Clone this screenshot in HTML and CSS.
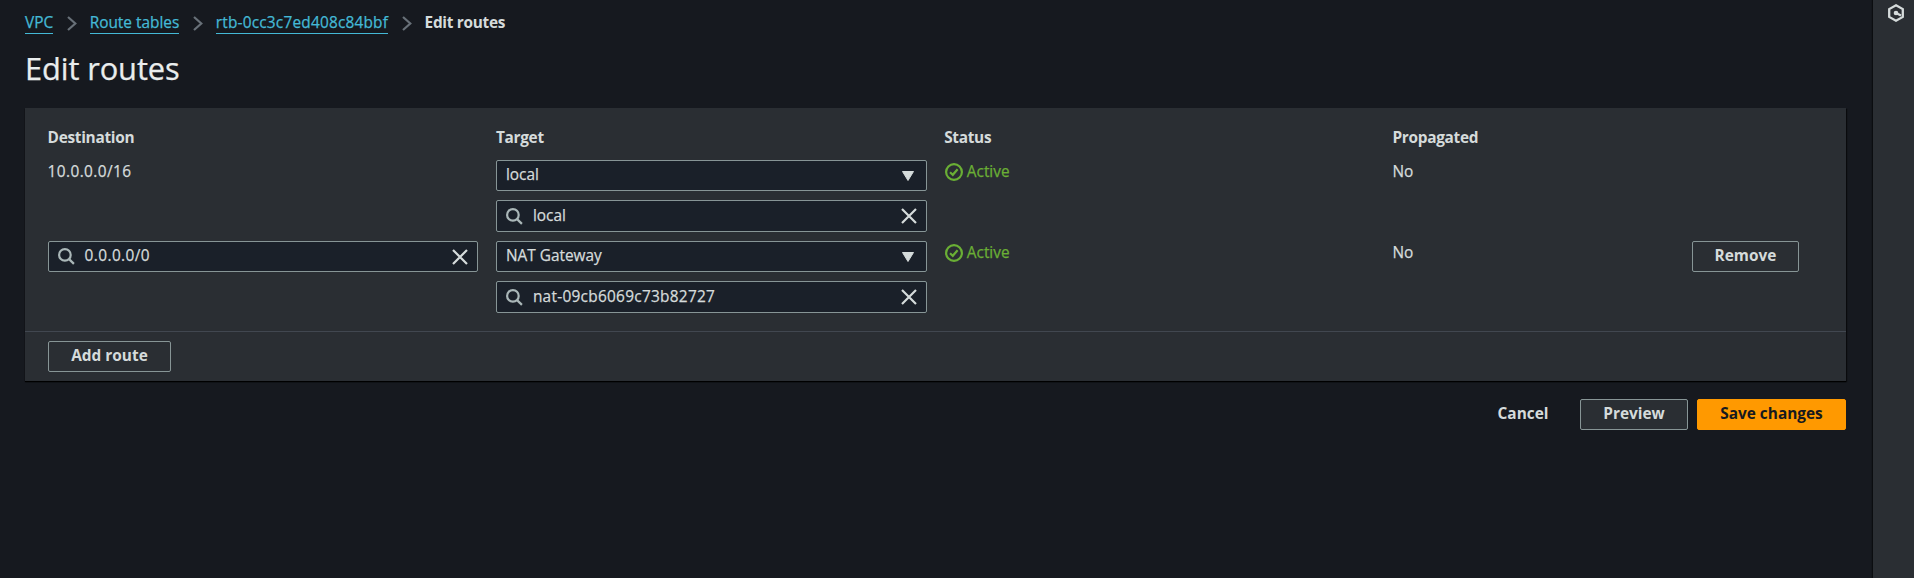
FILE: index.html
```
<!DOCTYPE html>
<html lang="en">
<head>
<meta charset="utf-8">
<title>Edit routes</title>
<link rel="stylesheet" href="styles.css">
</head>
<body>
<svg class="defs" aria-hidden="true">
  <symbol id="search" viewBox="0 0 17 17"><circle cx="6.9" cy="6.9" r="5.8"/><path d="M11.1 11.1 15.9 15.9"/></symbol>
  <symbol id="close" viewBox="0 0 16 16"><path d="M1 1 15 15M15 1 1 15"/></symbol>
  <symbol id="caret" viewBox="0 0 12 10"><path d="M.5.5h11L6 9.5z"/></symbol>
  <symbol id="check" viewBox="0 0 18 18"><circle cx="9" cy="9" r="7.9"/><path d="M5 9.2 7.8 11.8 12.6 6.2"/></symbol>
  <symbol id="chevron" viewBox="0 0 10 15"><path d="M1 1 8.3 7.5 1 14"/></symbol>
</svg>
<div class="app">
  <main class="main">
    <nav class="crumbs">
      <a class="link">VPC</a><svg class="chevron"><use href="#chevron"/></svg>
      <a class="link">Route tables</a><svg class="chevron"><use href="#chevron"/></svg>
      <a class="link link-id">rtb-0cc3c7ed408c84bbf</a><svg class="chevron"><use href="#chevron"/></svg>
      <span class="current">Edit routes</span>
    </nav>
    <h1 class="title">Edit routes</h1>
    <section class="card">
      <div class="routes">
        <div class="row head">
          <span>Destination</span><span>Target</span><span>Status</span><span>Propagated</span>
        </div>
        <div class="row">
          <div class="value cidr">10.0.0.0/16</div>
          <div class="fields">
            <div class="field select"><span class="text">local</span><svg class="caret"><use href="#caret"/></svg></div>
            <div class="field input"><svg class="search"><use href="#search"/></svg><span class="text">local</span><svg class="close"><use href="#close"/></svg></div>
          </div>
          <div class="value status"><svg class="check"><use href="#check"/></svg>Active</div>
          <div class="value">No</div>
        </div>
        <div class="row">
          <div class="fields">
            <div class="field"><svg class="search"><use href="#search"/></svg><span class="text cidr">0.0.0.0/0</span><svg class="close"><use href="#close"/></svg></div>
          </div>
          <div class="fields">
            <div class="field select"><span class="text">NAT Gateway</span><svg class="caret"><use href="#caret"/></svg></div>
            <div class="field input"><svg class="search"><use href="#search"/></svg><span class="text text-id">nat-09cb6069c73b82727</span><svg class="close"><use href="#close"/></svg></div>
          </div>
          <div class="value status"><svg class="check"><use href="#check"/></svg>Active</div>
          <div class="value">No</div>
          <button class="btn remove">Remove</button>
        </div>
      </div>
      <div class="card-foot"><button class="btn add">Add route</button></div>
    </section>
    <div class="actions">
      <button class="btn plain">Cancel</button>
      <button class="btn preview">Preview</button>
      <button class="btn primary">Save changes</button>
    </div>
  </main>
  <aside class="side">
    <svg class="hex" viewBox="0 0 16 18"><path class="hex-line" d="M8 1.3 14.8 5.1V12.9L8 16.7 1.2 12.9V5.1z"/><circle cx="8" cy="9" r="2.3"/><path class="hex-line" d="M8 9 13 11.6"/></svg>
  </aside>
</div>
</body>
</html>
```
FILE: styles.css
```
* { box-sizing: border-box; }
body {
  margin: 0;
  background: #16191f;
  color: #d5dbdb;
  font: 15.4px/24px "Open Sans", "Noto Sans", sans-serif;
}
svg { display: block; flex: none; fill: none; stroke: currentColor; stroke-width: 2.2; }
.defs { display: none; }
.app { display: flex; height: 578px; overflow: hidden; }
.main { flex: 1; padding: 10px 27px 0 25px; }
.side {
  width: 41px;
  padding: 4px 0 0 15px;
  background: #2a2e33;
  box-shadow: -1px 0 1px #0b0d10;
}
.hex { width: 16px; height: 18px; stroke: none; fill: #d5dbdb; }
.hex-line { fill: none; stroke: #d5dbdb; stroke-width: 2.3; }

.crumbs { display: flex; align-items: center; height: 24px; }
.link { height: 23px; color: #44b9d6; border-bottom: 1px solid #44b9d6; }
.link, .title, .value, .text { -webkit-text-stroke: .25px currentColor; }
.link-id { letter-spacing: .2px; }
.chevron { width: 10px; height: 15px; margin: 2px 12.5px 0 14px; color: #687078; }
.current { padding-top: 1px; font-weight: 700; letter-spacing: -.3px; }
.title {
  margin: 13px 0 19px;
  font-size: 30.8px;
  font-weight: 400;
  letter-spacing: -.1px;
  line-height: 42px;
  color: #eaeded;
}

.card {
  height: 273px;
  background: #2a2e33;
  box-shadow: 0 1px 1px 0 #000, 1px 1px 1px 0 #0b0d10;
}
.routes { height: 223px; padding: 18px 22px 0 22.6px; }
.row {
  display: grid;
  grid-template-columns: 430.8px 430.8px 430.8px 282px 107px;
  column-gap: 17.5px;
  height: 81px;
}
.head { height: 34px; font-weight: 700; letter-spacing: -.3px; }
.status { display: flex; gap: 4px; padding-left: .6px; color: #6aaf35; }
.check { width: 18px; height: 18px; margin-top: 3px; }
.cidr { letter-spacing: .4px; }
.fields { display: flex; flex-direction: column; gap: 9px; }
.field {
  display: flex;
  align-items: center;
  height: 31px;
  padding: 0 9px;
  background: #1a2029;
  border: 1px solid #879596;
  border-radius: 2px;
}
.input { height: 32px; }
.text { flex: 1; margin-top: -1px; }
.select .text { margin-top: -2px; }
.text-id { letter-spacing: .28px; }
.search { width: 17px; height: 17px; margin-right: 10px; color: #aab7b8; }
.close { width: 16px; height: 16px; }
.caret { width: 12px; height: 10px; margin-right: 3px; fill: currentColor; stroke-width: 1; stroke-linejoin: round; }

.card-foot { height: 50px; padding: 10px 23px 0; border-top: 1px solid #414750; }
.btn {
  height: 31px;
  padding: 0 0 1px;
  font: 700 15.4px/24px "Open Sans", "Noto Sans", sans-serif;
  color: #d5dbdb;
  background: #2a2e33;
  border: 1px solid #879596;
  border-radius: 2px;
}
.remove { width: 107px; }
.add { width: 123px; display: block; margin-top: -1px; }
.actions { display: flex; justify-content: flex-end; gap: 9px; margin-top: 18px; }
.plain { width: 96px; background: none; border-color: transparent; }
.preview { width: 108px; }
.primary { width: 149px; color: #16191f; background: #f90; border-color: #f90; }
```
